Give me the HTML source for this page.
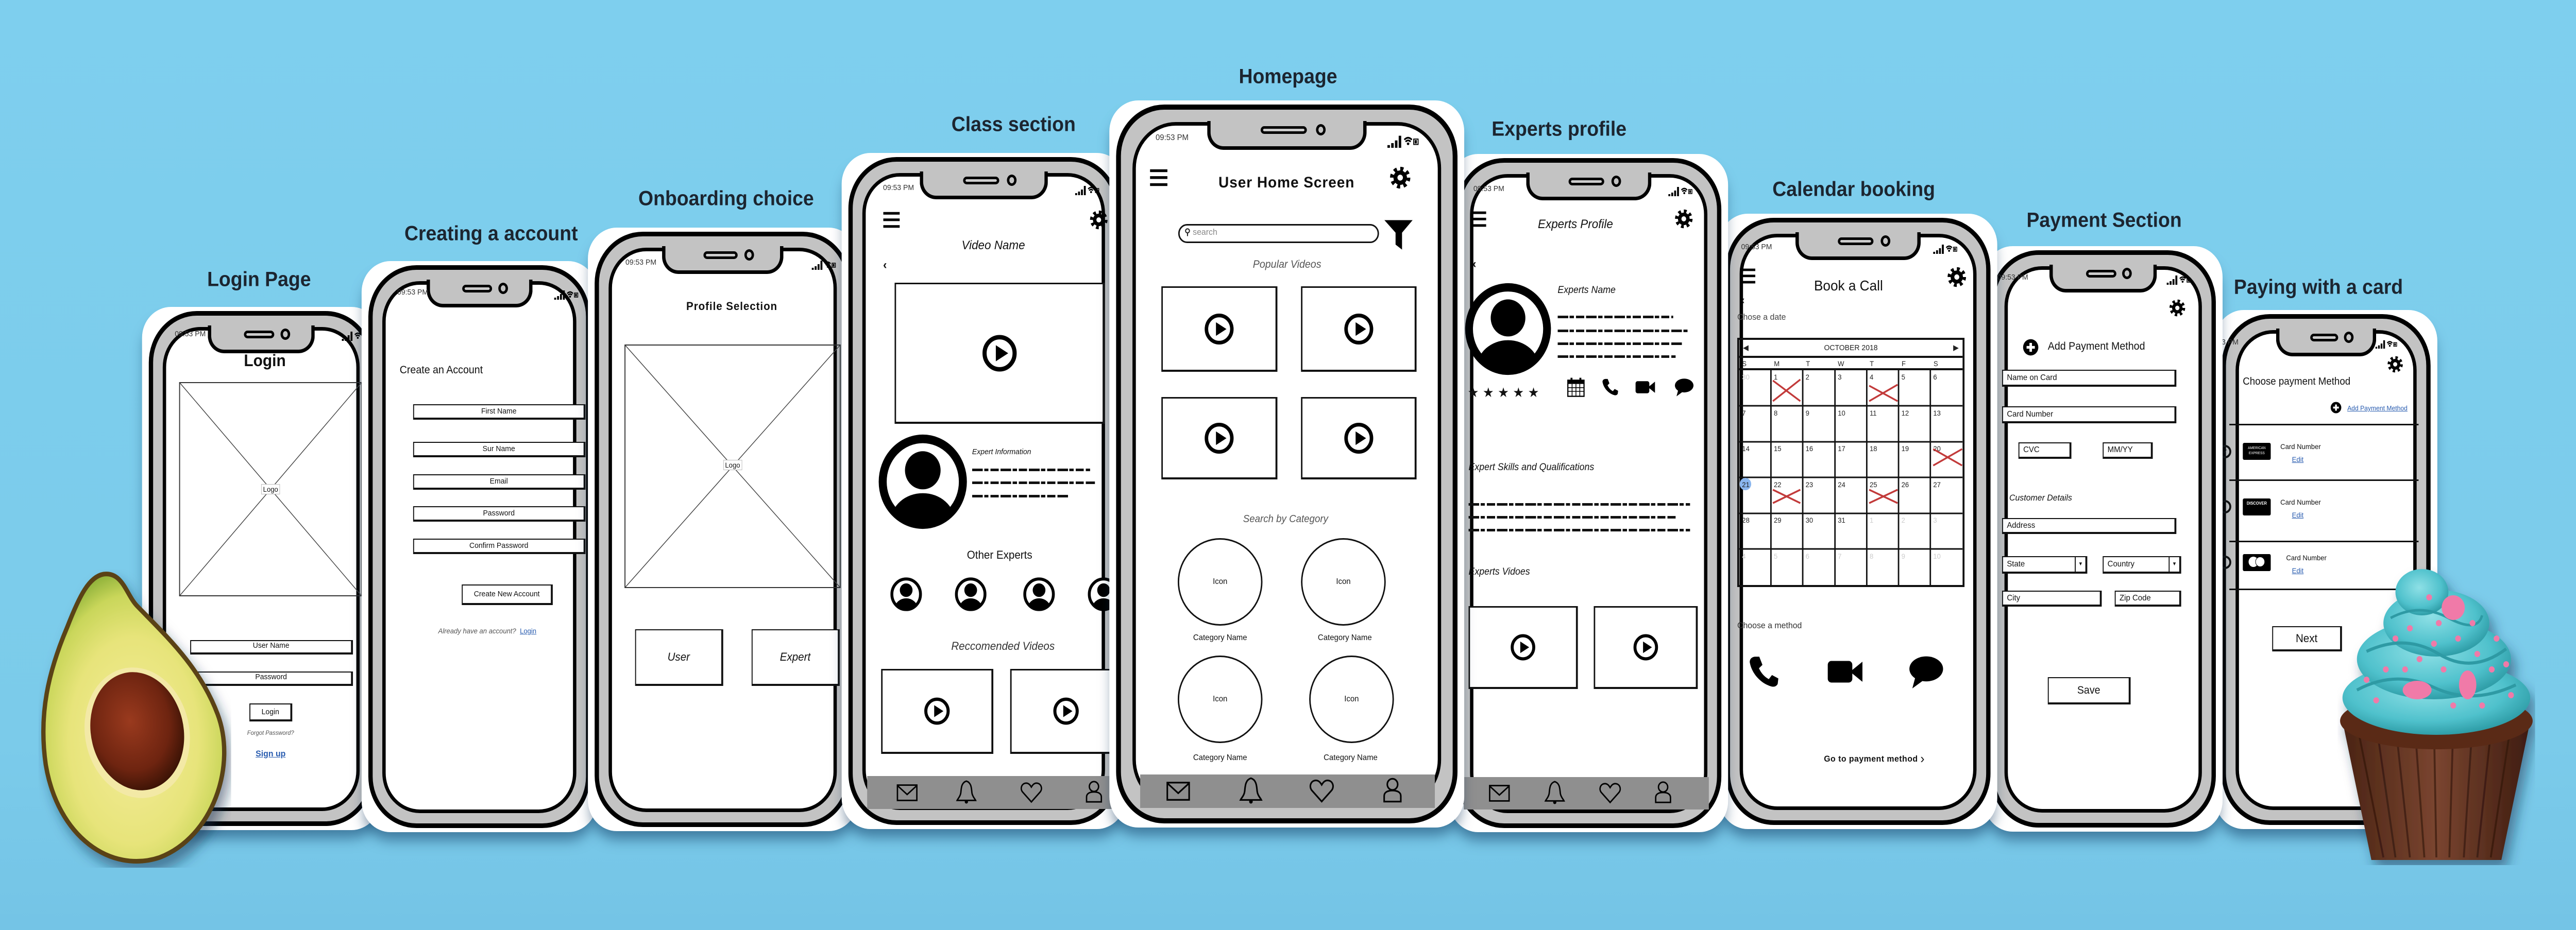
<!DOCTYPE html>
<html><head><meta charset="utf-8">
<style>
*{margin:0;padding:0;box-sizing:border-box}
html,body{width:100%;height:1806px;overflow:hidden;background:#7dcdec}
#w{position:absolute;left:0;top:0;width:5350px;height:1806px;overflow:hidden;background:linear-gradient(#7ecfee,#7bcbea 80%,#74c4e6);font-family:"Liberation Sans",sans-serif;color:#111;transform-origin:0 0}
@media (max-width:5300px){#w{transform:scaleX(0.93458)}}
.title{position:absolute;font-weight:bold;font-size:40px;color:#1c2530;white-space:nowrap;transform:translate(-50%,-50%)}
.card{position:absolute;background:#fff;border-radius:60px;box-shadow:0 22px 26px -6px rgba(10,50,90,.5)}
.frame{position:absolute;left:14px;right:14px;top:8px;bottom:8px;border:9px solid #000;border-radius:100px;background:#c3c3c3}
.scr{position:absolute;left:20px;right:20px;top:22px;bottom:20px;border:7px solid #000;border-radius:78px;background:#fff;overflow:hidden}
.notch{position:absolute;top:36px;left:50%;transform:translateX(-50%);width:45%;height:54px;background:#c3c3c3;border:7px solid #000;border-top:none;border-radius:0 0 34px 34px}
.notch .sp{position:absolute;left:33%;top:10px;width:30%;height:15px;border:5px solid #000;border-radius:10px;background:#ccc}
.notch .cam{position:absolute;left:69%;top:6px;width:20px;height:22px;border:5px solid #000;border-radius:50%}
.t{position:absolute;white-space:nowrap}
.c{transform:translateX(-50%)}
.st{position:absolute;font-size:15px;color:#333;white-space:nowrap}
.box{position:absolute;border:2px solid #111;border-right-width:4px;border-bottom-width:4px;background:#fff;font-size:15px;text-align:center;white-space:nowrap}
.fl{text-align:left;padding-left:8px;font-size:16px}
.vid{position:absolute;border:3px solid #111;border-right-width:4px;border-bottom-width:4px;background:#fff}
.vid svg{position:absolute;left:50%;top:50%;transform:translate(-50%,-50%)}
.ic{position:absolute}
.scrib{position:absolute;height:5px;background:repeating-linear-gradient(90deg,#111 0 22px,transparent 22px 25px,#111 25px 34px,transparent 34px 38px,#111 38px 55px,transparent 55px 59px)}
.tab{position:absolute;background:#8f8f8f}
.i{font-style:italic}
.lnk{color:#2a5db0;text-decoration:underline}
</style></head><body><div id="w">
<svg width="0" height="0" style="position:absolute">
<defs>
<symbol id="play" viewBox="0 0 100 100"><circle cx="50" cy="50" r="40" fill="none" stroke="#000" stroke-width="11"/><path d="M40 30 L73 50 L40 70Z"/></symbol>
<symbol id="gear" viewBox="0 0 100 100"><circle cx="50" cy="50" r="37" fill="none" stroke="#000" stroke-width="22" stroke-dasharray="14 15.06"/><circle cx="50" cy="50" r="32"/><circle cx="50" cy="50" r="13" fill="#fff"/></symbol>
<symbol id="ham" viewBox="0 0 100 100"><rect x="0" y="5" width="100" height="15"/><rect x="0" y="42" width="100" height="15"/><rect x="0" y="80" width="100" height="15"/></symbol>
<clipPath id="avc"><circle cx="50" cy="50" r="44"/></clipPath>
<symbol id="av" viewBox="0 0 100 100"><circle cx="50" cy="50" r="45" fill="#fff" stroke="#000" stroke-width="9"/><g clip-path="url(#avc)"><circle cx="50" cy="38" r="20"/><ellipse cx="50" cy="92" rx="36" ry="30"/></g></symbol>
<symbol id="mail" viewBox="0 0 100 100"><rect x="8" y="20" width="84" height="62" fill="none" stroke="#000" stroke-width="6"/><path d="M8 22 L50 58 L92 22" fill="none" stroke="#000" stroke-width="6"/></symbol>
<symbol id="bell" viewBox="0 0 100 100"><path d="M50 8 C28 14 28 38 26 55 C24 70 14 78 10 86 H90 C86 78 76 70 74 55 C72 38 72 14 50 8Z" fill="none" stroke="#000" stroke-width="6"/><circle cx="50" cy="92" r="7"/></symbol>
<symbol id="heart" viewBox="0 0 100 100"><path d="M50 88 L12 48 C0 34 8 12 28 12 C40 12 46 22 50 28 C54 22 60 12 72 12 C92 12 100 34 88 48Z" fill="none" stroke="#000" stroke-width="6"/></symbol>
<symbol id="user" viewBox="0 0 100 100"><circle cx="50" cy="30" r="20" fill="none" stroke="#000" stroke-width="6"/><path d="M18 92 V72 C18 58 32 52 50 52 C68 52 82 58 82 72 V92Z" fill="none" stroke="#000" stroke-width="6"/></symbol>
<symbol id="phone" viewBox="0 0 100 100"><path d="M22 8 L36 8 L46 32 L35 42 C43 58 54 68 66 74 L76 62 L96 72 L94 88 C90 95 84 97 76 96 C42 88 12 58 6 24 C6 15 12 9 22 8Z"/></symbol>
<symbol id="cam" viewBox="0 0 100 100"><rect x="2" y="22" width="68" height="56" rx="10"/><path d="M64 50 L98 24 V76Z"/></symbol>
<symbol id="chat" viewBox="0 0 100 100"><ellipse cx="52" cy="42" rx="46" ry="32"/><path d="M22 64 L14 92 L46 70Z"/></symbol>
<symbol id="cal" viewBox="0 0 100 100"><rect x="8" y="16" width="84" height="78" fill="none" stroke="#000" stroke-width="6"/><rect x="8" y="16" width="84" height="18"/><rect x="22" y="4" width="10" height="20"/><rect x="68" y="4" width="10" height="20"/><path d="M8 52H92M8 70H92M30 34V94M50 34V94M70 34V94" stroke="#000" stroke-width="4"/></symbol>
<symbol id="funnel" viewBox="0 0 100 100"><path d="M2 4 H98 L62 44 V98 L40 82 V44Z"/></symbol>
<symbol id="plus" viewBox="0 0 100 100"><circle cx="50" cy="50" r="48"/><rect x="24" y="42" width="52" height="16" fill="#fff"/><rect x="42" y="24" width="16" height="52" fill="#fff"/></symbol>
<symbol id="sig" viewBox="0 0 100 40"><rect x="0" y="32" width="8" height="8"/><rect x="12" y="26" width="8" height="14"/><rect x="24" y="18" width="8" height="22"/><rect x="36" y="4" width="8" height="36"/><path d="M54 16 Q66 4 78 16 M58 22 Q66 14 74 22" stroke="#000" stroke-width="5" fill="none"/><circle cx="66" cy="28" r="4"/><rect x="84" y="14" width="14" height="16" fill="none" stroke="#000" stroke-width="3"/><rect x="87" y="17" width="7" height="10"/></symbol>
</defs></svg>

<div class="title" style="left:538px;top:543px">Login Page</div>
<div class="title" style="left:1020px;top:454px">Creating a account</div>
<div class="title" style="left:1508px;top:386px">Onboarding choice</div>
<div class="title" style="left:2105px;top:242px">Class section</div>
<div class="title" style="left:2675px;top:149px">Homepage</div>
<div class="title" style="left:3238px;top:251px">Experts profile</div>
<div class="title" style="left:3850px;top:368px">Calendar booking</div>
<div class="title" style="left:4370px;top:428px">Payment Section</div>
<div class="title" style="left:4815px;top:558px">Paying with a card</div>

<div class="card" style="left:295px;top:596px;width:495px;height:1016px;z-index:1">
<div class="frame"><div class="scr"></div></div><div class="notch"><div class="sp"></div><div class="cam"></div></div>
<div class="st" style="left:68px;top:44px">09:53 PM</div>
<svg class="ic" style="left:400px;top:46px" width="80" height="20"><use href="#sig"/></svg>
<div class="t c" style="left:255px;top:86px;font-size:32px;font-weight:bold">Login</div>
<div style="position:absolute;left:77px;top:146px;width:380px;height:416px;border:2px solid #333"><svg width="100%" height="100%" viewBox="0 0 100 100" preserveAspectRatio="none" style="position:absolute"><path d="M0 0L100 100M100 0L0 100" stroke="#444" stroke-width="1.5" vector-effect="non-scaling-stroke"/></svg><div class="t c" style="left:50%;top:196px;font-size:14px;background:#fff;border:1px solid #bbb;padding:1px 3px">Logo</div></div>
<div class="box" style="left:100px;top:647px;width:338px;height:28px">User Name</div>
<div class="box" style="left:100px;top:708px;width:338px;height:28px">Password</div>
<div class="box" style="left:223px;top:770px;width:89px;height:35px;line-height:29px">Login</div>
<div class="t c i" style="left:267px;top:820px;font-size:12px;color:#555">Forgot Password?</div>
<div class="t c lnk" style="left:267px;top:858px;font-size:17px;font-weight:bold">Sign up</div>
</div>

<div class="card" style="left:751px;top:507px;width:489px;height:1109px;z-index:2">
<div class="frame"><div class="scr"></div></div><div class="notch"><div class="sp"></div><div class="cam"></div></div>
<div class="st" style="left:74px;top:52px">09:53 PM</div>
<svg class="ic" style="left:385px;top:55px" width="80" height="20"><use href="#sig"/></svg>
<div class="t" style="left:79px;top:200px;font-size:21px">Create an Account</div>
<div class="box" style="left:107px;top:278px;width:358px;height:30px;line-height:24px">First Name</div>
<div class="box" style="left:107px;top:351px;width:358px;height:30px;line-height:24px">Sur Name</div>
<div class="box" style="left:107px;top:414px;width:358px;height:30px;line-height:24px">Email</div>
<div class="box" style="left:107px;top:476px;width:358px;height:30px;line-height:24px">Password</div>
<div class="box" style="left:107px;top:539px;width:358px;height:30px;line-height:24px">Confirm Password</div>
<div class="box" style="left:208px;top:628px;width:189px;height:40px;line-height:34px">Create New Account</div>
<div class="t c" style="left:261px;top:710px;font-size:14px"><span class="i" style="color:#555">Already have an account?</span> &nbsp;<span class="lnk">Login</span></div>
</div>

<div class="card" style="left:1221px;top:442px;width:560px;height:1172px;z-index:3">
<div class="frame"><div class="scr"></div></div><div class="notch"><div class="sp"></div><div class="cam"></div></div>
<div class="st" style="left:78px;top:59px">09:53 PM</div>
<svg class="ic" style="left:450px;top:62px" width="80" height="20"><use href="#sig"/></svg>
<div class="t c" style="left:299px;top:140px;font-size:22px;font-weight:bold;letter-spacing:1px">Profile Selection</div>
<div style="position:absolute;left:76px;top:227px;width:449px;height:473px;border:2px solid #333"><svg width="100%" height="100%" viewBox="0 0 100 100" preserveAspectRatio="none" style="position:absolute"><path d="M0 0L100 100M100 0L0 100" stroke="#444" stroke-width="1.5" vector-effect="non-scaling-stroke"/></svg><div class="t c" style="left:50%;top:222px;font-size:14px;background:#fff;border:1px solid #bbb;padding:1px 3px">Logo</div></div>
<div class="box i" style="left:98px;top:780px;width:183px;height:110px;line-height:104px;font-size:22px">User</div>
<div class="box i" style="left:340px;top:780px;width:183px;height:110px;line-height:104px;font-size:22px">Expert</div>
</div>

<div class="card" style="left:1748px;top:297px;width:590px;height:1313px;z-index:4">
<div class="frame"><div class="scr"></div></div><div class="notch"><div class="sp"></div><div class="cam"></div></div>
<div class="st" style="left:86px;top:59px">09:53 PM</div>
<svg class="ic" style="left:470px;top:62px" width="80" height="20"><use href="#sig"/></svg>
<svg class="ic" style="left:84px;top:113px" width="39" height="34"><use href="#ham"/></svg>
<svg class="ic" style="left:515px;top:111px" width="38" height="38"><use href="#gear"/></svg>
<div class="t c i" style="left:315px;top:166px;font-size:24px">Video Name</div>
<div class="t" style="left:86px;top:204px;font-size:24px;font-weight:bold">‹</div>
<div class="vid" style="left:110px;top:252px;width:436px;height:274px"><svg width="78" height="78"><use href="#play"/></svg></div>
<svg class="ic" style="left:76px;top:546px" width="185" height="185"><use href="#av"/></svg>
<div class="t i" style="left:271px;top:572px;font-size:15px">Expert Information</div>
<div class="scrib" style="left:271px;top:613px;width:245px"></div>
<div class="scrib" style="left:271px;top:638px;width:255px"></div>
<div class="scrib" style="left:271px;top:664px;width:200px"></div>
<div class="t c" style="left:328px;top:768px;font-size:22px">Other Experts</div>
<svg class="ic" style="left:101px;top:824px" width="66" height="66"><use href="#av"/></svg>
<svg class="ic" style="left:235px;top:824px" width="66" height="66"><use href="#av"/></svg>
<svg class="ic" style="left:377px;top:824px" width="66" height="66"><use href="#av"/></svg>
<svg class="ic" style="left:511px;top:824px" width="66" height="66"><use href="#av"/></svg>
<div class="t c i" style="left:335px;top:945px;font-size:22px;color:#333">Reccomended Videos</div>
<div class="vid" style="left:82px;top:1002px;width:233px;height:165px"><svg width="58" height="58"><use href="#play"/></svg></div>
<div class="vid" style="left:350px;top:1002px;width:233px;height:165px"><svg width="58" height="58"><use href="#play"/></svg></div>
<div class="tab" style="left:53px;top:1210px;width:537px;height:64px"></div>
<svg class="ic" style="left:112px;top:1218px" width="48" height="48"><use href="#mail"/></svg>
<svg class="ic" style="left:235px;top:1216px" width="48" height="48"><use href="#bell"/></svg>
<svg class="ic" style="left:370px;top:1218px" width="48" height="48"><use href="#heart"/></svg>
<svg class="ic" style="left:500px;top:1216px" width="48" height="48"><use href="#user"/></svg>
</div>

<div class="card" style="left:2304px;top:195px;width:737px;height:1412px;z-index:9">
<div class="frame" style="border-width:10px"><div class="scr" style="left:24px;right:24px;top:24px;bottom:24px;border-radius:90px"></div></div><div class="notch" style="top:40px;height:56px"><div class="sp"></div><div class="cam"></div></div>
<div class="st" style="left:96px;top:64px;font-size:16px">09:53 PM</div>
<svg class="ic" style="left:560px;top:66px" width="100" height="26"><use href="#sig"/></svg>
<svg class="ic" style="left:80px;top:132px" width="45" height="36"><use href="#ham"/></svg>
<div class="t c" style="left:368px;top:143px;font-size:30px;font-weight:bold;letter-spacing:1px">User Home Screen</div>
<svg class="ic" style="left:582px;top:128px" width="44" height="44"><use href="#gear"/></svg>
<div style="position:absolute;left:143px;top:240px;width:417px;height:37px;border:3px solid #111;border-radius:20px"><div class="t" style="left:10px;top:3px;font-size:17px;color:#888"><b style="color:#222">&#9906;</b> search</div></div>
<svg class="ic" style="left:570px;top:229px" width="61" height="63"><use href="#funnel"/></svg>
<div class="t c i" style="left:369px;top:307px;font-size:21px;color:#555">Popular Videos</div>
<div class="vid" style="left:108px;top:361px;width:241px;height:166px"><svg width="66" height="66"><use href="#play"/></svg></div>
<div class="vid" style="left:398px;top:361px;width:240px;height:166px"><svg width="66" height="66"><use href="#play"/></svg></div>
<div class="vid" style="left:108px;top:576px;width:241px;height:160px"><svg width="66" height="66"><use href="#play"/></svg></div>
<div class="vid" style="left:398px;top:576px;width:240px;height:160px"><svg width="66" height="66"><use href="#play"/></svg></div>
<div class="t c i" style="left:366px;top:802px;font-size:20px;color:#555">Search by Category</div>
<div style="position:absolute;left:142px;top:850px;width:176px;height:170px;border:3px solid #111;border-radius:50%;text-align:center;line-height:164px;font-size:16px">Icon</div>
<div style="position:absolute;left:398px;top:850px;width:176px;height:170px;border:3px solid #111;border-radius:50%;text-align:center;line-height:164px;font-size:16px">Icon</div>
<div style="position:absolute;left:142px;top:1078px;width:176px;height:170px;border:3px solid #111;border-radius:50%;text-align:center;line-height:164px;font-size:16px">Icon</div>
<div style="position:absolute;left:415px;top:1078px;width:176px;height:170px;border:3px solid #111;border-radius:50%;text-align:center;line-height:164px;font-size:16px">Icon</div>
<div class="t c" style="left:230px;top:1035px;font-size:16px">Category Name</div>
<div class="t c" style="left:489px;top:1035px;font-size:16px">Category Name</div>
<div class="t c" style="left:230px;top:1268px;font-size:16px">Category Name</div>
<div class="t c" style="left:501px;top:1268px;font-size:16px">Category Name</div>
<div class="tab" style="left:64px;top:1309px;width:612px;height:65px"></div>
<svg class="ic" style="left:116px;top:1314px" width="54" height="54"><use href="#mail"/></svg>
<svg class="ic" style="left:267px;top:1312px" width="54" height="54"><use href="#bell"/></svg>
<svg class="ic" style="left:414px;top:1314px" width="54" height="54"><use href="#heart"/></svg>
<svg class="ic" style="left:561px;top:1312px" width="54" height="54"><use href="#user"/></svg>
</div>

<div class="card" style="left:3010px;top:299px;width:579px;height:1317px;z-index:8">
<div class="frame"><div class="scr"></div></div><div class="notch"><div class="sp"></div><div class="cam"></div></div>
<div class="st" style="left:50px;top:59px">09:53 PM</div>
<svg class="ic" style="left:440px;top:62px" width="80" height="20"><use href="#sig"/></svg>
<svg class="ic" style="left:42px;top:110px" width="36" height="33"><use href="#ham"/></svg>
<div class="t c i" style="left:262px;top:123px;font-size:24px">Experts Profile</div>
<svg class="ic" style="left:468px;top:107px" width="38" height="38"><use href="#gear"/></svg>
<div class="t" style="left:48px;top:200px;font-size:24px;font-weight:bold">‹</div>
<svg class="ic" style="left:32px;top:250px" width="180" height="180"><use href="#av"/></svg>
<div class="t i" style="left:225px;top:254px;font-size:19px">Experts Name</div>
<div class="scrib" style="left:225px;top:314px;width:240px"></div>
<div class="scrib" style="left:225px;top:341px;width:274px"></div>
<div class="scrib" style="left:225px;top:366px;width:260px"></div>
<div class="scrib" style="left:225px;top:391px;width:245px"></div>
<div class="t" style="left:38px;top:448px;font-size:26px;letter-spacing:8px">★★★★★</div>
<svg class="ic" style="left:243px;top:433px" width="40" height="40"><use href="#cal"/></svg>
<svg class="ic" style="left:316px;top:434px" width="36" height="36"><use href="#phone"/></svg>
<svg class="ic" style="left:386px;top:432px" width="42" height="42"><use href="#cam"/></svg>
<svg class="ic" style="left:466px;top:432px" width="42" height="42"><use href="#chat"/></svg>
<div class="t i" style="left:40px;top:598px;font-size:19px">Expert Skills and Qualifications</div>
<div class="scrib" style="left:40px;top:678px;width:460px"></div>
<div class="scrib" style="left:40px;top:703px;width:430px"></div>
<div class="scrib" style="left:40px;top:728px;width:460px"></div>
<div class="t i" style="left:40px;top:801px;font-size:19px">Experts Vidoes</div>
<div class="vid" style="left:40px;top:878px;width:227px;height:161px"><svg width="56" height="56"><use href="#play"/></svg></div>
<div class="vid" style="left:300px;top:878px;width:216px;height:161px"><svg width="56" height="56"><use href="#play"/></svg></div>
<div class="tab" style="left:30px;top:1210px;width:509px;height:63px"></div>
<svg class="ic" style="left:80px;top:1217px" width="48" height="48"><use href="#mail"/></svg>
<svg class="ic" style="left:195px;top:1215px" width="48" height="48"><use href="#bell"/></svg>
<svg class="ic" style="left:310px;top:1217px" width="48" height="48"><use href="#heart"/></svg>
<svg class="ic" style="left:420px;top:1215px" width="48" height="48"><use href="#user"/></svg>
</div>

<div class="card" style="left:3570px;top:415px;width:578px;height:1195px;z-index:7">
<div class="frame"><div class="scr"></div></div><div class="notch"><div class="sp"></div><div class="cam"></div></div>
<div class="st" style="left:46px;top:56px">09:53 PM</div>
<svg class="ic" style="left:430px;top:58px" width="80" height="20"><use href="#sig"/></svg>
<svg class="ic" style="left:40px;top:105px" width="39" height="32"><use href="#ham"/></svg>
<div class="t c" style="left:269px;top:124px;font-size:28px">Book a Call</div>
<svg class="ic" style="left:474px;top:103px" width="40" height="40"><use href="#gear"/></svg>
<div class="t" style="left:46px;top:155px;font-size:22px;font-weight:bold">‹</div>
<div class="t" style="left:38px;top:191px;font-size:17px;color:#444">Chose a date</div>
<div style="position:absolute;left:38px;top:241px;width:472px;height:484px;border:4px solid #111;font-size:13px;color:#222">
 <div style="position:absolute;left:0;top:0;right:0;height:35px;border-bottom:4px solid #111;text-align:center;line-height:32px;font-size:15px">OCTOBER 2018<span style="position:absolute;left:8px">◀</span><span style="position:absolute;right:8px">▶</span></div>
 <div style="position:absolute;left:0;top:35px;right:0;height:24px;border-bottom:4px solid #111;display:flex;font-size:14px;line-height:22px"><span style="flex:1;padding-left:6px">S</span><span style="flex:1;padding-left:6px">M</span><span style="flex:1;padding-left:6px">T</span><span style="flex:1;padding-left:6px">W</span><span style="flex:1;padding-left:6px">T</span><span style="flex:1;padding-left:6px">F</span><span style="flex:1;padding-left:6px">S</span></div>
 <svg style="position:absolute;left:0;top:59px" width="464" height="417" viewBox="0 0 464 417">
  <g stroke="#111" stroke-width="3"><path d="M66 0V417M132 0V417M199 0V417M265 0V417M331 0V417M397 0V417M0 69H464M0 139H464M0 208H464M0 278H464M0 347H464"/></g>
  <g font-family="Liberation Sans" font-size="14" fill="#222">
   <text x="6" y="18" fill="#ccc">30</text><text x="72" y="18">1</text><text x="138" y="18">2</text><text x="205" y="18">3</text><text x="271" y="18">4</text><text x="337" y="18">5</text><text x="403" y="18">6</text>
   <text x="6" y="88">7</text><text x="72" y="88">8</text><text x="138" y="88">9</text><text x="205" y="88">10</text><text x="271" y="88">11</text><text x="337" y="88">12</text><text x="403" y="88">13</text>
   <text x="6" y="157">14</text><text x="72" y="157">15</text><text x="138" y="157">16</text><text x="205" y="157">17</text><text x="271" y="157">18</text><text x="337" y="157">19</text><text x="403" y="157">20</text>
   <circle cx="13" cy="221" r="12" fill="#8ab6ee"/>
   <text x="6" y="227">21</text><text x="72" y="227">22</text><text x="138" y="227">23</text><text x="205" y="227">24</text><text x="271" y="227">25</text><text x="337" y="227">26</text><text x="403" y="227">27</text>
   <text x="6" y="296">28</text><text x="72" y="296">29</text><text x="138" y="296">30</text><text x="205" y="296">31</text><text x="271" y="296" fill="#ccc">1</text><text x="337" y="296" fill="#ccc">2</text><text x="403" y="296" fill="#ccc">3</text>
   <g fill="#ccc"><text x="6" y="366">4</text><text x="72" y="366">5</text><text x="138" y="366">6</text><text x="205" y="366">7</text><text x="271" y="366">8</text><text x="337" y="366">9</text><text x="403" y="366">10</text></g>
  </g>
  <g stroke="#c23a3a" stroke-width="3.5" fill="none"><path d="M70 20L127 60M70 60L127 18"/><path d="M270 30L329 60M270 60L329 28"/><path d="M403 153L463 185M403 185L463 153"/><path d="M70 232L127 258M70 258L127 232"/><path d="M270 232L329 258M270 258L329 232"/></g>
 </svg>
</div>
<div class="t" style="left:38px;top:790px;font-size:17px;color:#333">Choose a method</div>
<svg class="ic" style="left:60px;top:855px" width="66" height="66"><use href="#phone"/></svg>
<svg class="ic" style="left:218px;top:852px" width="88" height="75"><use href="#cam"/></svg>
<svg class="ic" style="left:386px;top:852px" width="86" height="76"><use href="#chat"/></svg>
<div class="t" style="left:218px;top:1043px;font-size:17px;font-weight:bold;letter-spacing:.5px">Go to payment method <span style="font-size:26px;font-weight:normal;vertical-align:-3px">›</span></div>
</div>

<div class="card" style="left:4120px;top:478px;width:496px;height:1137px;z-index:6">
<div class="frame"><div class="scr"></div></div><div class="notch"><div class="sp"></div><div class="cam"></div></div>
<div class="st" style="left:28px;top:52px">09:53 PM</div>
<svg class="ic" style="left:365px;top:55px" width="80" height="20"><use href="#sig"/></svg>
<svg class="ic" style="left:-8px;top:107px" width="36" height="30"><use href="#ham"/></svg>
<svg class="ic" style="left:385px;top:103px" width="34" height="34"><use href="#gear"/></svg>
<svg class="ic" style="left:81px;top:180px" width="33" height="33"><use href="#plus"/></svg>
<div class="t" style="left:133px;top:183px;font-size:21px">Add Payment Method</div>
<div class="box fl" style="left:38px;top:240px;width:362px;height:33px;line-height:27px">Name on Card</div>
<div class="box fl" style="left:38px;top:311px;width:362px;height:33px;line-height:27px">Card Number</div>
<div class="box fl" style="left:72px;top:381px;width:110px;height:32px;line-height:26px">CVC</div>
<div class="box fl" style="left:247px;top:381px;width:104px;height:32px;line-height:26px">MM/YY</div>
<div class="t i" style="left:53px;top:479px;font-size:17px">Customer Details</div>
<div class="box fl" style="left:38px;top:528px;width:362px;height:31px;line-height:25px">Address</div>
<div class="box fl" style="left:38px;top:602px;width:177px;height:34px;line-height:28px">State<span style="position:absolute;right:0;top:0;bottom:0;width:22px;border-left:2px solid #111;font-size:10px;text-align:center">▼</span></div>
<div class="box fl" style="left:247px;top:602px;width:163px;height:34px;line-height:28px">Country<span style="position:absolute;right:0;top:0;bottom:0;width:22px;border-left:2px solid #111;font-size:10px;text-align:center">▼</span></div>
<div class="box fl" style="left:38px;top:669px;width:207px;height:31px;line-height:25px">City</div>
<div class="box fl" style="left:272px;top:669px;width:138px;height:31px;line-height:25px">Zip Code</div>
<div class="box" style="left:133px;top:837px;width:172px;height:53px;line-height:47px;font-size:21px">Save</div>
</div>

<div class="card" style="left:4600px;top:602px;width:462px;height:1008px;z-index:5">
<div class="frame"><div class="scr"></div></div><div class="notch"><div class="sp"></div><div class="cam"></div></div>
<div class="st" style="left:14px;top:54px">3 PM</div>
<svg class="ic" style="left:320px;top:57px" width="72" height="18"><use href="#sig"/></svg>
<svg class="ic" style="left:358px;top:89px" width="33" height="33"><use href="#gear"/></svg>
<div class="t" style="left:58px;top:128px;font-size:20px">Choose payment Method</div>
<svg class="ic" style="left:240px;top:178px" width="23" height="23"><use href="#plus"/></svg>
<div class="t lnk" style="left:275px;top:183px;font-size:13px">Add Payment Method</div>
<div style="position:absolute;left:30px;width:393px;top:221px;height:3px;background:#111"></div>
<div style="position:absolute;left:30px;width:393px;top:329px;height:3px;background:#111"></div>
<div style="position:absolute;left:30px;width:393px;top:448px;height:3px;background:#111"></div>
<div style="position:absolute;left:30px;width:393px;top:541px;height:3px;background:#111"></div>
<div style="position:absolute;left:8px;top:262px;width:26px;height:26px;border:4px solid #111;border-radius:50%;font-size:14px;line-height:18px;text-align:center">✓</div>
<div style="position:absolute;left:8px;top:369px;width:26px;height:26px;border:4px solid #111;border-radius:50%"></div>
<div style="position:absolute;left:8px;top:477px;width:26px;height:26px;border:4px solid #111;border-radius:50%"></div>
<div style="position:absolute;left:58px;top:258px;width:58px;height:33px;background:#000;color:#fff;font-size:7px;line-height:10px;text-align:center;padding-top:6px;border-radius:3px">AMERICAN<br>EXPRESS</div>
<div style="position:absolute;left:58px;top:366px;width:58px;height:33px;background:#000;color:#fff;font-size:8px;font-weight:bold;line-height:20px;text-align:center;border-radius:3px">DISCOVER</div>
<div style="position:absolute;left:58px;top:474px;width:58px;height:33px;background:#000;border-radius:3px"><div style="position:absolute;left:12px;top:5px;width:20px;height:20px;border-radius:50%;background:#fff"></div><div style="position:absolute;left:26px;top:5px;width:20px;height:20px;border-radius:50%;background:#fff;border:1px solid #000"></div></div>
<div class="t" style="left:136px;top:257px;font-size:14px">Card Number</div>
<div class="t lnk" style="left:160px;top:282px;font-size:14px">Edit</div>
<div class="t" style="left:136px;top:365px;font-size:14px">Card Number</div>
<div class="t lnk" style="left:160px;top:390px;font-size:14px">Edit</div>
<div class="t" style="left:148px;top:473px;font-size:14px">Card Number</div>
<div class="t lnk" style="left:160px;top:498px;font-size:14px">Edit</div>
<div class="box" style="left:119px;top:614px;width:145px;height:49px;line-height:43px;font-size:22px">Next</div>
</div>

<svg style="position:absolute;left:80px;top:1105px;z-index:10" width="400" height="580" viewBox="0 0 400 580">
<defs>
<radialGradient id="fl" cx="50%" cy="58%" r="60%"><stop offset="0" stop-color="#f4ec9a"/><stop offset=".6" stop-color="#e7e47a"/><stop offset=".85" stop-color="#c9d65a"/><stop offset="1" stop-color="#8fb23a"/></radialGradient>
<radialGradient id="pit" cx="45%" cy="40%" r="60%"><stop offset="0" stop-color="#9a3a1e"/><stop offset=".7" stop-color="#6e2410"/><stop offset="1" stop-color="#3e1406"/></radialGradient>
<filter id="sh"><feDropShadow dx="10" dy="18" stdDeviation="12" flood-color="#0a3050" flood-opacity=".5"/></filter>
</defs>
<path filter="url(#sh)" d="M135 10 C175 5 182 50 205 72 C265 130 335 190 372 282 C412 382 362 520 252 560 C150 592 40 520 15 380 C0 282 20 200 60 112 C85 52 105 15 135 10Z" fill="url(#fl)" stroke="#5a4214" stroke-width="9"/>
<ellipse cx="205" cy="318" rx="108" ry="128" transform="rotate(-15 205 318)" fill="#f3e9a6"/>
<ellipse cx="205" cy="315" rx="96" ry="116" transform="rotate(-15 205 315)" fill="url(#pit)"/>
</svg>

<svg style="position:absolute;left:4855px;top:1100px;z-index:10" width="410" height="580" viewBox="0 0 410 580">
<defs>
<linearGradient id="lin" x1="0" x2="1"><stop offset="0" stop-color="#4a2414"/><stop offset=".5" stop-color="#7a4530"/><stop offset="1" stop-color="#3e1c10"/></linearGradient>
<radialGradient id="fr" cx="45%" cy="40%" r="60%"><stop offset="0" stop-color="#8ee0e6"/><stop offset=".7" stop-color="#4fc1cc"/><stop offset="1" stop-color="#2f9ea8"/></radialGradient>
</defs>
<g filter="url(#sh)">
<path d="M10 300 H400 L340 570 H70Z" fill="url(#lin)"/>
<g stroke="#2e140a" stroke-width="4" opacity=".6"><path d="M40 305L95 565M80 305L120 565M120 305L150 565M160 305L180 565M200 305L205 565M240 305L232 565M280 305L262 565M320 305L290 565M360 305L318 565"/></g>
<ellipse cx="205" cy="300" rx="200" ry="55" fill="#5a2c18"/>
<ellipse cx="205" cy="255" rx="195" ry="72" fill="url(#fr)"/>
<ellipse cx="200" cy="180" rx="160" ry="78" fill="url(#fr)"/>
<ellipse cx="205" cy="110" rx="110" ry="65" fill="url(#fr)"/>
<ellipse cx="175" cy="50" rx="55" ry="45" fill="url(#fr)"/>
<path d="M40 240 Q120 200 200 235 T370 230" stroke="#2d9aa4" stroke-width="6" fill="none"/>
<path d="M60 165 Q140 130 210 170 T350 160" stroke="#2d9aa4" stroke-width="6" fill="none"/>
<path d="M110 100 Q170 70 230 100 T300 95" stroke="#2d9aa4" stroke-width="5" fill="none"/>
</g>
<g fill="#f07aa8">
<circle cx="240" cy="80" r="24"/><ellipse cx="270" cy="230" rx="18" ry="28"/><ellipse cx="165" cy="240" rx="30" ry="18"/>
<circle cx="120" cy="140" r="6"/><circle cx="150" cy="120" r="6"/><circle cx="200" cy="150" r="6"/><circle cx="250" cy="140" r="6"/><circle cx="290" cy="170" r="6"/><circle cx="320" cy="200" r="6"/><circle cx="100" cy="200" r="6"/><circle cx="140" cy="200" r="6"/><circle cx="220" cy="200" r="6"/><circle cx="330" cy="140" r="6"/><circle cx="80" cy="260" r="6"/><circle cx="240" cy="270" r="6"/><circle cx="300" cy="270" r="6"/><circle cx="360" cy="250" r="6"/><circle cx="190" cy="60" r="6"/><circle cx="280" cy="110" r="6"/><circle cx="60" cy="220" r="6"/><circle cx="350" cy="190" r="6"/><circle cx="170" cy="180" r="6"/><circle cx="210" cy="110" r="6"/>
</g>
</svg>
</div></body></html>
